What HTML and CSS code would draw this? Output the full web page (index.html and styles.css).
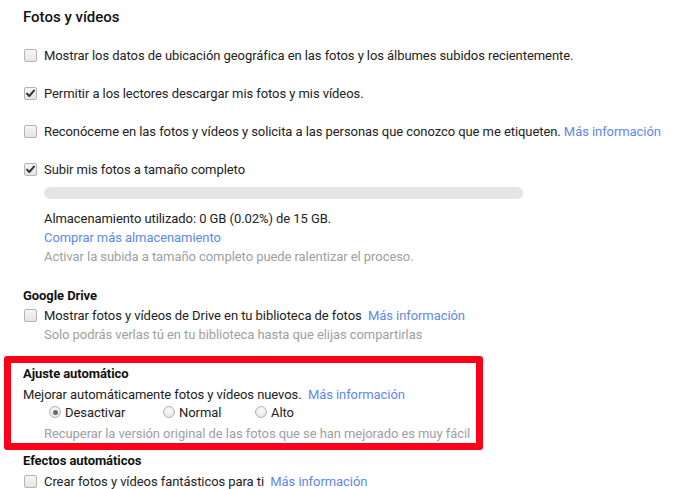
FILE: index.html
```html
<!DOCTYPE html>
<html lang="es">
<head>
<meta charset="utf-8">
<title>Fotos y vídeos</title>
<link rel="stylesheet" href="styles.css">
</head>
<body>
<div class="settings">
  <h2 class="title">Fotos y vídeos</h2>

  <div class="opt">
    <span class="cb"></span>
    <span>Mostrar los datos de ubicación geográfica en las fotos y los álbumes subidos recientemente.</span>
  </div>
  <div class="opt">
    <span class="cb checked"><svg viewBox="0 0 13 13"><path d="M3 6.6 L5.3 9 L10 3.6" /></svg></span>
    <span>Permitir a los lectores descargar mis fotos y mis vídeos.</span>
  </div>
  <div class="opt">
    <span class="cb"></span>
    <span>Reconóceme en las fotos y vídeos y solicita a las personas que conozco que me etiqueten. <a class="link">Más información</a></span>
  </div>
  <div class="opt last">
    <span class="cb checked"><svg viewBox="0 0 13 13"><path d="M3 6.6 L5.3 9 L10 3.6" /></svg></span>
    <span>Subir mis fotos a tamaño completo</span>
  </div>

  <div class="storage">
    <div class="bar"></div>
    <div class="line">Almacenamiento utilizado: 0 GB (0.02%) de 15 GB.</div>
    <div class="line"><a class="link">Comprar más almacenamiento</a></div>
    <div class="line muted">Activar la subida a tamaño completo puede ralentizar el proceso.</div>
  </div>

  <h3 class="sub">Google Drive</h3>
  <div class="opt tight">
    <span class="cb"></span>
    <span>Mostrar fotos y vídeos de Drive en tu biblioteca de fotos&nbsp; <a class="link">Más información</a></span>
  </div>
  <div class="line muted indent">Solo podrás verlas tú en tu biblioteca hasta que elijas compartirlas</div>

  <div class="highlight">
    <h3 class="sub flush">Ajuste automático</h3>
    <div class="line desc">Mejorar automáticamente fotos y vídeos nuevos.&nbsp; <a class="link">Más información</a></div>
    <div class="radios">
      <label class="radio r1"><span class="rb on"></span>Desactivar</label>
      <label class="radio r2"><span class="rb"></span>Normal</label>
      <label class="radio"><span class="rb"></span>Alto</label>
    </div>
    <div class="line muted recover">Recuperar la versión original de las fotos que se han mejorado es muy fácil</div>
  </div>

  <h3 class="sub flush">Efectos automáticos</h3>
  <div class="opt tight">
    <span class="cb"></span>
    <span>Crear fotos y vídeos fantásticos para ti&nbsp; <a class="link">Más información</a></span>
  </div>
</div>
</body>
</html>
```

FILE: styles.css
```css
html, body {
  margin: 0;
  padding: 0;
  background: #fff;
}

body {
  font-family: Roboto, "Liberation Sans", Arial, sans-serif;
  font-size: 13px;
  color: #222;
  line-height: 19px;
  letter-spacing: -0.07px;
}

.settings {
  padding-left: 23px;
  padding-top: 7px;
}

.title {
  font-size: 15px;
  font-weight: 500;
  line-height: 20px;
  margin: 0 0 18.5px 0;
  color: #111;
  letter-spacing: 0;
}

.opt {
  display: flex;
  align-items: center;
  margin-bottom: 19px;
}

.opt.last {
  margin-bottom: 0;
}

.opt.tight {
  margin-bottom: 0;
}

.cb {
  flex: none;
  box-sizing: border-box;
  width: 13px;
  height: 13px;
  margin: 0 7px 0 1px;
  border: 1px solid #b4b4b4;
  border-radius: 2px;
  background: linear-gradient(#f6f6f6, #e4e4e4);
  display: flex;
  align-items: center;
  justify-content: center;
}

.cb svg {
  width: 13px;
  height: 13px;
  flex: none;
}

.cb svg path {
  fill: none;
  stroke: #333;
  stroke-width: 2;
  stroke-linecap: round;
  stroke-linejoin: round;
}

.link {
  color: #5e88e8;
  text-decoration: none;
  cursor: pointer;
}

.storage {
  padding-left: 21px;
  padding-top: 8.5px;
}

.bar {
  width: 479px;
  height: 12px;
  border-radius: 6px;
  background: #e5e5e5;
  margin-bottom: 9.5px;
}

.muted {
  color: #a0a0a0;
}

.indent {
  padding-left: 21px;
}

.sub {
  font-size: 13px;
  font-weight: 700;
  line-height: 19px;
  margin: 20px 0 1px 0;
  color: #111;
}

.sub.flush {
  margin: 0 0 2px 0;
}

.highlight {
  box-sizing: border-box;
  width: 479px;
  margin: 12.5px 0 1px -19px;
  padding: 0 0 0 12px;
  border: 7px solid #fc0019;
  border-radius: 3px;
}

.highlight .sub.flush {
  margin-top: 0.5px;
}

.desc {
  margin-bottom: -1px;
}

.radios {
  display: flex;
  align-items: center;
  padding-left: 26px;
}

.radio {
  display: flex;
  align-items: center;
}

.radio.r1 {
  width: 114px;
}

.radio.r2 {
  width: 92px;
}

.rb {
  flex: none;
  box-sizing: border-box;
  width: 12px;
  height: 12px;
  margin-right: 4px;
  border: 1px solid #b4b4b4;
  border-radius: 50%;
  background: radial-gradient(circle at 50% 35%, #fafafa, #e2e2e2);
  display: flex;
  align-items: center;
  justify-content: center;
}

.rb.on::after {
  content: "";
  width: 5px;
  height: 5px;
  border-radius: 50%;
  background: #6a6a6a;
}

.recover {
  margin-top: 2px;
  padding-left: 21px;
}
```
